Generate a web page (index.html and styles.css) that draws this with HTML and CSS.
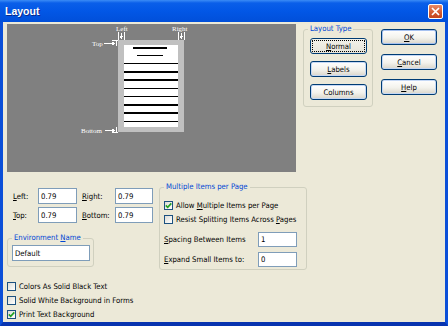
FILE: index.html
```html
<!DOCTYPE html>
<html>
  <head>
    <title>Layout</title>
    <link rel="stylesheet" href="styles.css">
  </head>
  <body>
    <div class="window">
      <div class="titlebar">
        <span class="title">Layout</span>
        <span class="close">
          <svg width="9" height="9" viewBox="0 0 9 9"><path d="M1 1L8 8M8 1L1 8" stroke="#fff" stroke-width="1.7"/></svg>
        </span>
      </div>

      <div class="frame">
        <div class="top-row">
          <div class="preview">
            <svg width="289" height="148" viewBox="7 24 289 148" shape-rendering="crispEdges">
              <rect x="118" y="40" width="66" height="92" fill="#c0c0c0"/>
              <rect x="124" y="45" width="54" height="82" fill="#fff"/>
              <rect x="133" y="47" width="34" height="2" fill="#000"/>
              <rect x="137" y="55" width="26" height="1" fill="#000"/>
              <rect x="124" y="63" width="54" height="1" fill="#000"/>
              <rect x="124" y="71" width="54" height="2" fill="#000"/>
              <rect x="124" y="79" width="54" height="2" fill="#000"/>
              <rect x="124" y="88" width="54" height="1" fill="#000"/>
              <rect x="124" y="96" width="54" height="1" fill="#000"/>
              <rect x="124" y="104" width="54" height="2" fill="#000"/>
              <rect x="124" y="112" width="54" height="2" fill="#000"/>
              <rect x="124" y="121" width="54" height="1" fill="#000"/>

              <g class="marks" fill="#fff">
                <text x="116" y="31">Left</text>
                <text x="172" y="31">Right</text>
                <text x="92" y="46">Top</text>
                <text x="81" y="133">Bottom</text>
              </g>
              <g stroke="#fff" stroke-width="1" fill="none">
                <path d="M118.5 32v8M124.5 32v8M121.5 33v4"/>
                <path d="M178.5 32v8M184.5 32v8M181.5 33v4"/>
                <path d="M104 43.5h10M116.5 40v6M112 40.5h6"/>
                <path d="M105 130.5h9M116.5 127v6M112 132.5h6"/>
              </g>
              <g fill="#fff">
                <polygon points="119.5,36 123.5,36 121.5,39"/>
                <polygon points="179.5,36 183.5,36 181.5,39"/>
                <polygon points="112,41.5 115,43.5 112,45.5"/>
                <polygon points="112,128.5 115,130.5 112,132.5"/>
              </g>
            </svg>
          </div>

          <fieldset class="group layout-type">
            <legend>Layout Type</legend>
            <div class="type-buttons">
              <button class="btn focused"><u>N</u>ormal</button>
              <button class="btn"><u>L</u>abels</button>
              <button class="btn">Columns</button>
            </div>
          </fieldset>

          <div class="actions">
            <button class="btn default"><u>O</u>K</button>
            <button class="btn"><u>C</u>ancel</button>
            <button class="btn"><u>H</u>elp</button>
          </div>
        </div>

        <div class="bottom-row">
          <div class="left-col">
            <div class="margins">
              <label><u>L</u>eft:</label>
              <input class="field" type="text" value="0.79">
              <label class="second"><u>R</u>ight:</label>
              <input class="field" type="text" value="0.79">
              <label><u>T</u>op:</label>
              <input class="field" type="text" value="0.79">
              <label class="second"><u>B</u>ottom:</label>
              <input class="field" type="text" value="0.79">
            </div>

            <fieldset class="group env">
              <legend>Environment <u>N</u>ame</legend>
              <input class="field" type="text" value="Default">
            </fieldset>
          </div>

          <fieldset class="group multi">
            <legend>Multiple Items per Page</legend>
            <div class="check-row">
              <span class="box checked"><svg width="7" height="7" viewBox="0 0 7 7"><path d="M0.8 3.4l1.9 1.9L6.3 1.4" stroke="#21a121" stroke-width="1.6" fill="none"/></svg></span>
              <span>Allow <u>M</u>ultiple Items per Page</span>
            </div>
            <div class="check-row">
              <span class="box"></span>
              <span>Resist Splitting Items Across <u>P</u>ages</span>
            </div>
            <div class="spin-row first">
              <label><u>S</u>pacing Between Items</label>
              <input class="field" type="text" value="1">
            </div>
            <div class="spin-row">
              <label><u>E</u>xpand Small Items to:</label>
              <input class="field" type="text" value="0">
            </div>
          </fieldset>
        </div>

        <div class="options">
          <div class="check-row">
            <span class="box"></span>
            <span>Colors As Solid Black Text</span>
          </div>
          <div class="check-row">
            <span class="box"></span>
            <span>Solid White Background in Forms</span>
          </div>
          <div class="check-row">
            <span class="box checked"><svg width="7" height="7" viewBox="0 0 7 7"><path d="M0.8 3.4l1.9 1.9L6.3 1.4" stroke="#21a121" stroke-width="1.6" fill="none"/></svg></span>
            <span>Print Text Background</span>
          </div>
        </div>
      </div>
    </div>
  </body>
</html>
```

FILE: styles.css
```css
* {
    box-sizing: border-box;
}

body {
    margin: 0;
    font-family: "DejaVu Sans Condensed", "DejaVu Sans", sans-serif;
    font-stretch: condensed;
    font-size: 7.7px;
    color: #000;
}

u {
    text-decoration: underline;
}

.window {
    width: 448px;
    height: 326px;
    display: flex;
    flex-direction: column;
}

.titlebar {
    height: 22px;
    display: flex;
    align-items: center;
    justify-content: space-between;
    padding: 0 5px 0 5px;
    background: linear-gradient(#3b8cf6 0, #0a5fe9 3px, #0257e6 50%, #014fd9 100%);
}

.title {
    font-family: "Liberation Sans", sans-serif;
    font-weight: bold;
    font-size: 10.5px;
    color: #fff;
    text-shadow: 1px 1px #0a2a8c;
}

.close {
    width: 15px;
    height: 15px;
    display: flex;
    align-items: center;
    justify-content: center;
    border: 1px solid #fff;
    border-radius: 2px;
    background: linear-gradient(#e88a66, #d3592f 60%, #c2441e);
}

.frame {
    flex: 1;
    background: #ece9d8;
    border: 3px solid #0b4fd8;
    border-top: 0;
    border-bottom: 4px solid #0834b0;
    padding: 2px 0 0 4px;
}

.top-row {
    display: flex;
    align-items: flex-start;
}

.preview {
    width: 289px;
    height: 148px;
    flex-shrink: 0;
    background: #808080;
}

.preview svg {
    display: block;
}

.marks text {
    font-family: "Liberation Serif", serif;
    font-size: 7px;
}

.group {
    margin: 0;
    border: 1px solid #d0d0bf;
    border-radius: 3px;
    min-width: 0;
}

.group legend {
    padding: 0 2px;
    margin-left: 0;
    color: #0046d5;
    line-height: 10px;
}

.layout-type {
    margin-left: 7px;
    width: 70px;
    padding: 4px 6px 6px 6px;
}

.layout-type legend {
    margin-left: -2px;
}

.type-buttons {
    display: flex;
    flex-direction: column;
    gap: 7px;
}

.btn {
    display: block;
    width: 57px;
    height: 16px;
    padding: 0;
    font: inherit;
    color: #000;
    border: 1px solid #003c74;
    border-radius: 3px;
    background: linear-gradient(#ffffff, #f3f2ec 55%, #d9d5c9);
    box-shadow: inset 0 0 0 1px #c5d8f5;
}

.btn.focused {
    background: linear-gradient(#f2f1ea, #e6e4da);
    box-shadow: none;
    outline: 1px dotted #000;
    outline-offset: -3px;
}

.actions {
    margin-left: 8px;
    width: 56px;
    padding-top: 5px;
    display: flex;
    flex-direction: column;
    gap: 9px;
}

.actions .btn {
    width: 100%;
}

.btn.default {
    box-shadow: inset 0 0 0 1px #a7c2f0;
}

.field {
    display: block;
    height: 16px;
    margin: 0;
    padding: 0 2px;
    font: inherit;
    color: #000;
    background: #fff;
    border: 1px solid #7f9db9;
    outline: none;
}

.bottom-row {
    display: flex;
    align-items: flex-start;
    margin-top: 10px;
}

.left-col {
    width: 152px;
}

.margins {
    display: grid;
    grid-template-columns: 25px 39px 38px 38px;
    row-gap: 3px;
    align-items: center;
    margin-top: 6px;
    padding-left: 6px;
}

.margins .field {
    width: 100%;
}

.margins .second {
    padding-left: 5px;
}

.env {
    margin-top: 10px;
    width: 87px;
    padding: 2px 3px 5px 4px;
}

.env .field {
    width: 78px;
}

.multi {
    width: 148px;
    padding: 6px 4px 2px 4px;
}

.check-row {
    display: flex;
    align-items: center;
    gap: 3px;
    height: 14px;
    white-space: nowrap;
}

.box {
    width: 9px;
    height: 9px;
    flex-shrink: 0;
    display: flex;
    align-items: center;
    justify-content: center;
    border: 1px solid #1c5180;
    background: linear-gradient(135deg, #dcdcd7, #ffffff);
}

.spin-row {
    display: flex;
    align-items: center;
    justify-content: space-between;
    margin-top: 5px;
    padding-right: 5px;
}

.spin-row.first {
    margin-top: 6px;
}

.spin-row .field {
    width: 39px;
    height: 15px;
}

.options {
    margin-top: 9px;
}
```
